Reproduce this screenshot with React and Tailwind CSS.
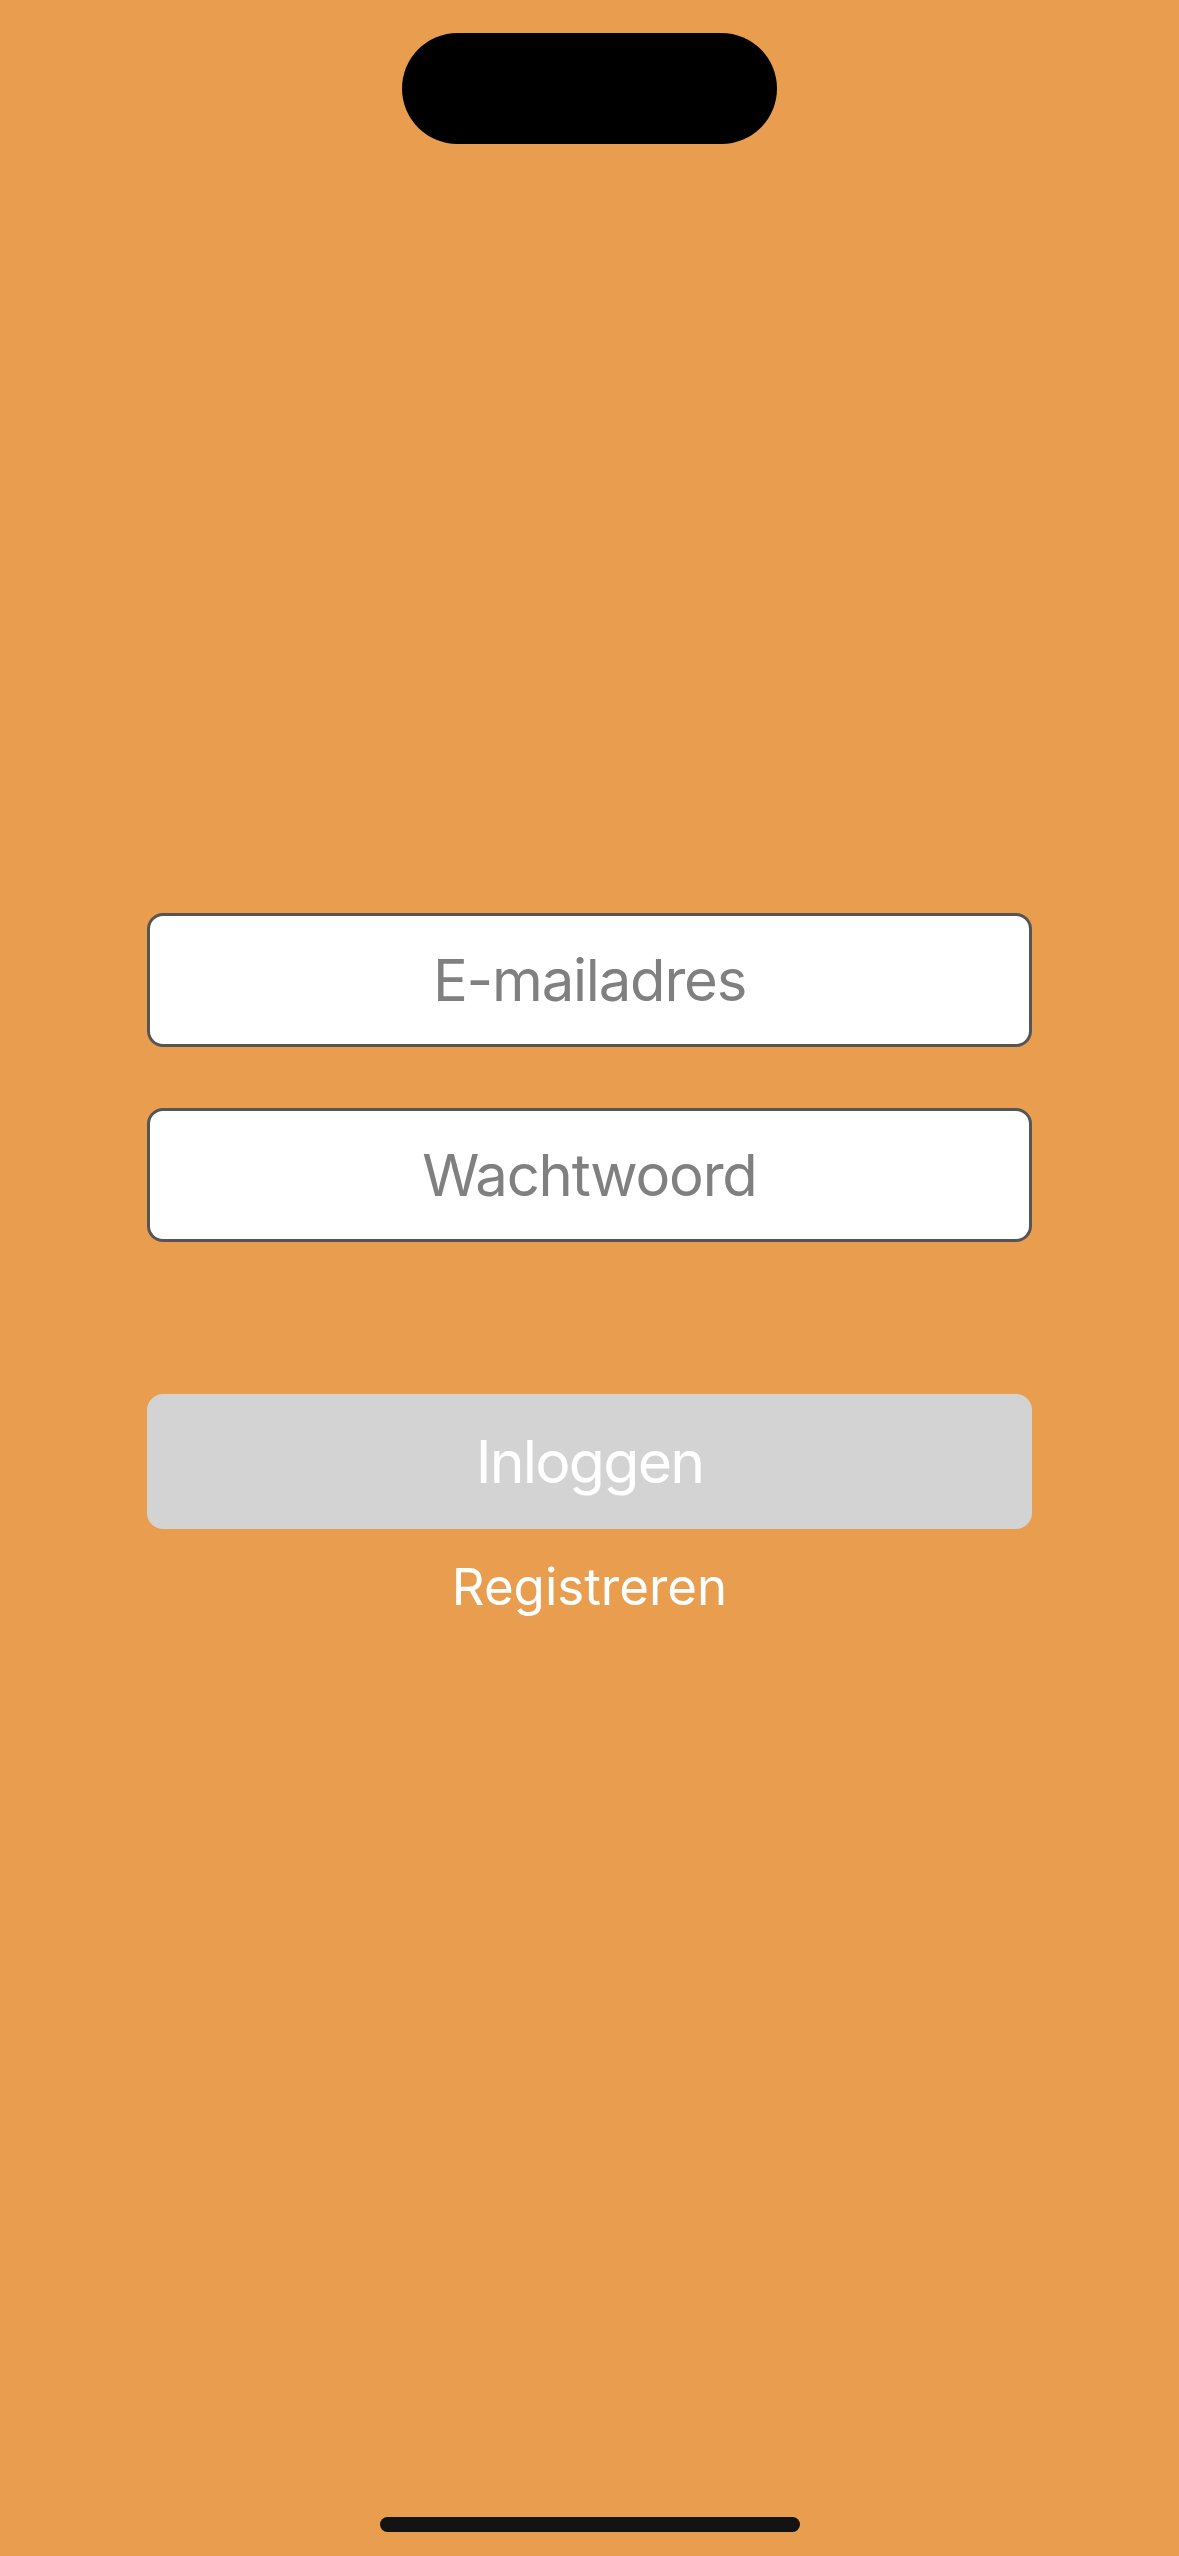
export default function App() {
  return (
    <div
      className="relative flex h-[2556px] w-[1179px] flex-col items-center overflow-hidden bg-[#e99e4f]"
      style={{ fontFamily: 'Inter, "Noto Sans", sans-serif' }}
    >
      <div className="mt-[33px] h-[111px] w-[375px] rounded-full bg-black" />

      <div className="mt-[769px] flex w-[885px] flex-col">
        <div className="flex h-[134px] items-center justify-center rounded-[16px] border-[3px] border-[#555555] bg-white">
          <span className="text-[58px] leading-[58px] tracking-[-1.2px] text-[#808080]">E-mailadres</span>
        </div>
        <div className="mt-[61px] flex h-[134px] items-center justify-center rounded-[16px] border-[3px] border-[#555555] bg-white">
          <span className="text-[58px] leading-[58px] tracking-[-1.2px] text-[#808080]">Wachtwoord</span>
        </div>
        <div className="mt-[152px] flex h-[135px] items-center justify-center rounded-[16px] bg-[#d3d3d3]">
          <span className="text-[59px] leading-[59px] tracking-[-1.8px] text-white">Inloggen</span>
        </div>
        <div className="mt-[32px] flex justify-center">
          <span className="text-[51px] leading-[51px] text-white">Registreren</span>
        </div>
      </div>

      <div className="absolute bottom-[24px] left-[380px] h-[15px] w-[420px] rounded-full bg-[#131313]" />
    </div>
  );
}
